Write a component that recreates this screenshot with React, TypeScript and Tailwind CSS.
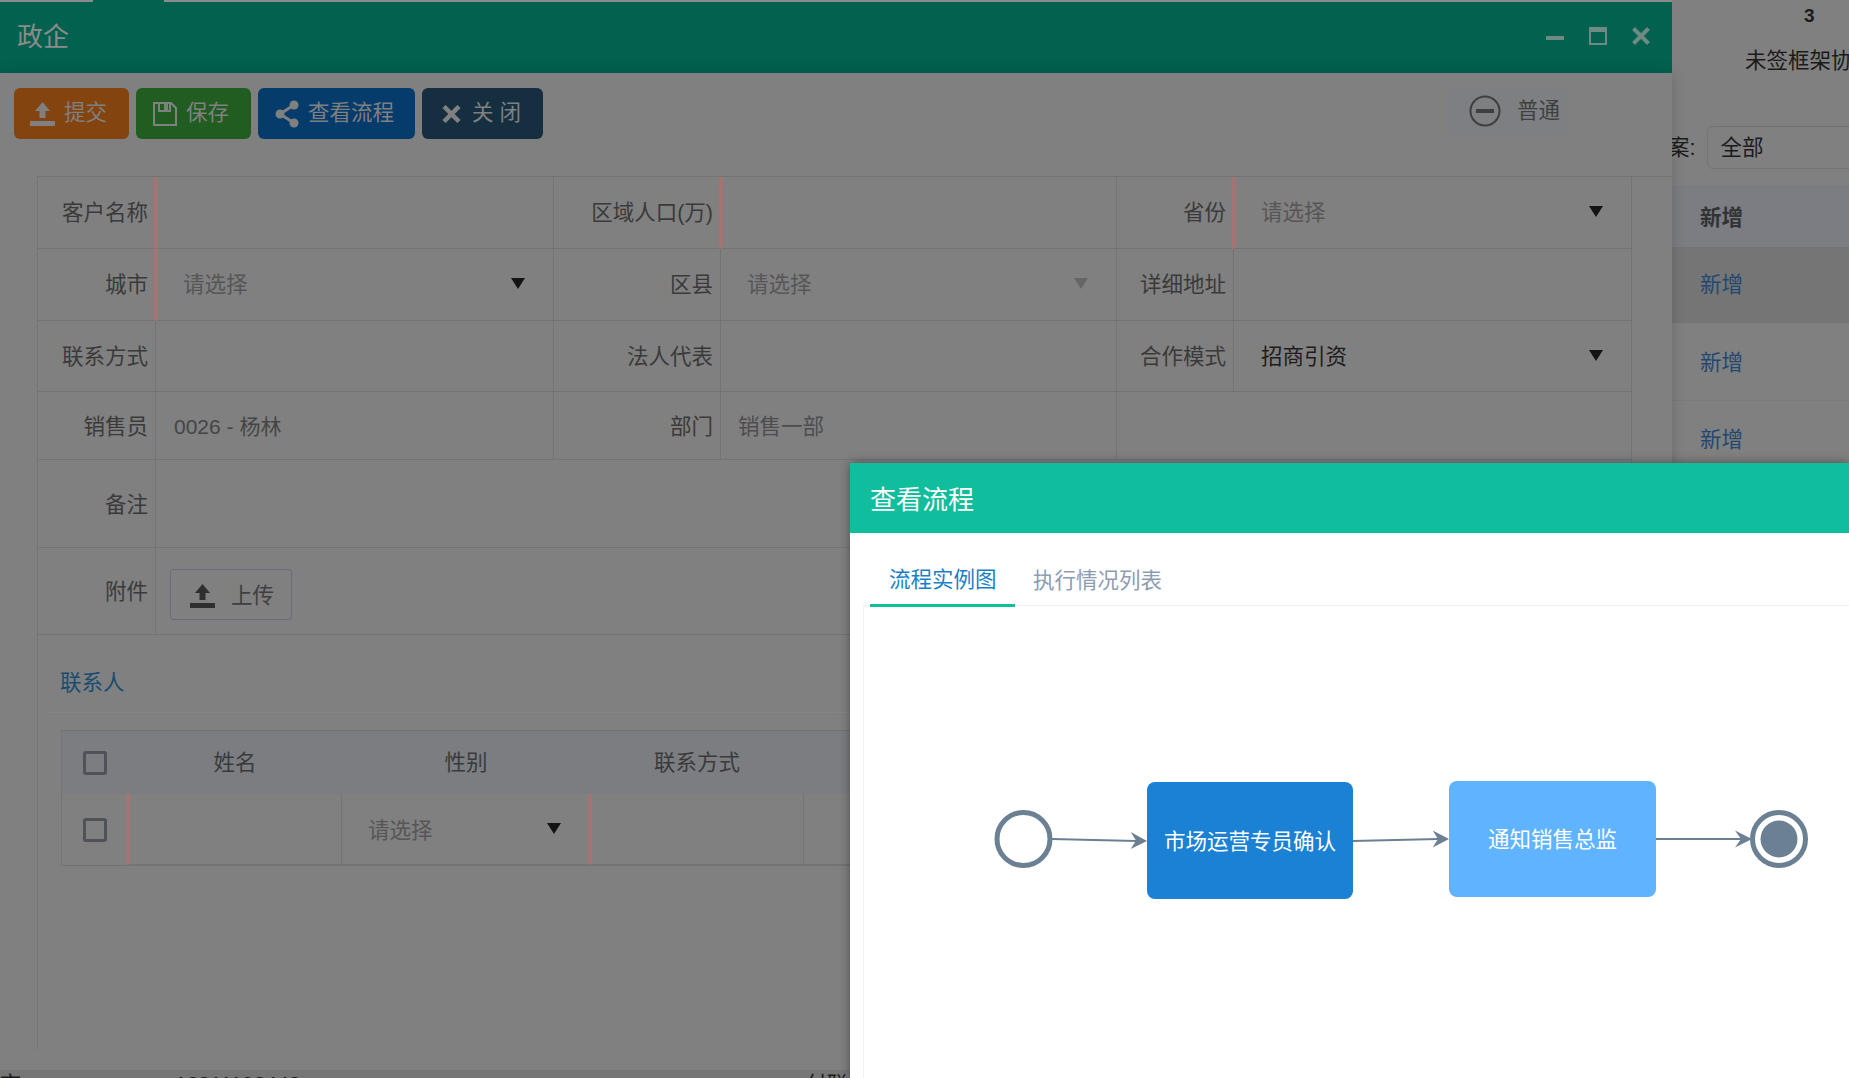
import type { ReactNode } from "react";

const UploadIcon = ({ className }: { className: string }) => (
  <svg viewBox="0 0 25 24" className={className} fill="currentColor">
    <path d="M0 19h25v5H0z" />
    <path d="M12.5 0 20 9h-4.5v7h-6V9H5z" />
  </svg>
);

const Caret = ({ muted }: { muted?: boolean }) => (
  <svg viewBox="0 0 14 11" className={`w-[14px] h-[11px] -mt-[2px] ${muted ? "text-[#666666]" : "text-[#141414]"}`} fill="currentColor">
    <path d="M0 0h14L7 11z" />
  </svg>
);

const Label = ({ children, className = "pt-[2px]" }: { children: ReactNode; className?: string }) => (
  <div className={`flex items-center justify-end pr-[7px] border-r border-b border-[#727374] text-[#3a3a3a] ${className}`}>
    {children}
  </div>
);

const Input = ({ required, children, className = "" }: { required?: boolean; children?: ReactNode; className?: string }) => (
  <div
    className={`flex items-center border-r border-b border-[#727374] ${
      required ? "border-l-4 border-l-[#a47474] -ml-[2px]" : ""
    } ${className}`}
  >
    {children}
  </div>
);

const Select = ({ required, muted }: { required?: boolean; muted?: boolean }) => (
  <Input required={required} className={`justify-between pr-[28px] ${required ? "pl-[25px]" : "pl-[26px]"}`}>
    <span className="pt-[2px] text-[#565656]">请选择</span>
    <Caret muted={muted} />
  </Input>
);

const ToolButton = ({ color, className, icon, children }: { color: string; className: string; icon: ReactNode; children: ReactNode }) => (
  <button className={`h-[51px] flex items-center rounded-[6px] text-[#808080] ${color} ${className}`}>
    {icon}
    <span>{children}</span>
  </button>
);

const Checkbox = () => <div className="w-6 h-6 border-[3px] border-[#50525a] rounded-[3px]" />;

const FlowDiagram = () => {
  const stroke = "#6b8093";
  return (
    <div className="relative flex-1">
      <svg className="absolute inset-0 w-full h-full" fill="none">
        <circle cx="159.5" cy="233" r="26.5" stroke={stroke} strokeWidth="5" />
        <path d="M188 233 272 235" stroke={stroke} strokeWidth="2" />
        <path d="M283 235 266.7 226l5.3 8.5-5.3 8.5z" fill={stroke} />
        <path d="M489 235 574 233" stroke={stroke} strokeWidth="2" />
        <path d="M585 233 568.7 224.5l5.3 8.5-5.3 8.5z" fill={stroke} />
        <path d="M792 233H877" stroke={stroke} strokeWidth="2" />
        <path d="M888 233 871 224.5l6 8.5-6 8.5z" fill={stroke} />
        <circle cx="915" cy="233" r="26.5" stroke={stroke} strokeWidth="5" />
        <circle cx="915" cy="233" r="18.5" fill={stroke} />
      </svg>
      <div className="absolute left-[283px] top-[176px] w-[206px] h-[117px] pt-[3px] flex items-center justify-center rounded-[8px] bg-[#1b81d5] text-white">
        市场运营专员确认
      </div>
      <div className="absolute left-[585px] top-[175px] w-[207px] h-[116px] pt-[3px] flex items-center justify-center rounded-[8px] bg-[#5fb3ff] text-white">
        通知销售总监
      </div>
    </div>
  );
};

const App = () => {
  return (
    <div className="relative flex w-[1849px] h-[1078px] overflow-hidden bg-[#808080] text-[21.5px] [font-family:'Liberation_Sans','Noto_Sans_CJK_SC',sans-serif]">
      {/* main window */}
      <div className="relative z-10 w-[1672px] shrink-0 flex flex-col">
        <div className="flex h-[2px] bg-[#8c8c8c]">
          <div className="w-[93px]" />
          <div className="w-[71px] bg-[#03614f]" />
        </div>
        <div className="h-[71px] flex items-center justify-between bg-[#03614f] pl-[17px] pr-[22px]">
          <span className="text-[26px] text-[#8c8c8c]">政企</span>
          <div className="flex items-center -mt-[3px] text-[#6f8a82]">
            <div className="w-[18px] h-[4px] mt-1 bg-current" />
            <div className="w-[18px] h-[18px] ml-[25px] border-2 border-t-[5px] border-current" />
            <svg viewBox="0 0 18 18" className="w-[18px] h-[18px] ml-[25px]" stroke="currentColor" strokeWidth="4">
              <path d="M1.5 1.5 16.5 16.5M16.5 1.5 1.5 16.5" />
            </svg>
          </div>
        </div>

        <div className="h-[997px] flex flex-col bg-[#808080] shadow-[0_0_12px_rgba(0,0,0,0.18)]">
          {/* toolbar */}
          <div className="flex justify-between h-[51px] mt-[15px] pl-[14px] pr-[106px]">
            <div className="flex gap-[7px]">
              <ToolButton
                color="bg-[#83440f]"
                className="w-[115px] pl-4 gap-[9px]"
                icon={<UploadIcon className="w-[25px] h-6" />}
              >
                提交
              </ToolButton>
              <ToolButton
                color="bg-[#215c20]"
                className="w-[115px] pl-[17px] gap-[9px]"
                icon={
                  <svg viewBox="0 0 24 24" className="w-6 h-6" fill="none" stroke="currentColor" strokeWidth="2">
                    <path d="M1 1h17l5 5v17H1z" />
                    <path d="M6 1v8h11V1" />
                    <path d="M11 2h4v6h-4z" fill="currentColor" stroke="none" />
                  </svg>
                }
              >
                保存
              </ToolButton>
              <ToolButton
                color="bg-[#053c6b]"
                className="w-[157px] pl-4 gap-2"
                icon={
                  <svg viewBox="0 0 26 30" className="w-[26px] h-[30px]" fill="currentColor" stroke="currentColor" strokeWidth="3">
                    <path d="M20 6 6 15l14 9" fill="none" />
                    <circle cx="6" cy="15" r="4.5" stroke="none" />
                    <circle cx="20" cy="6" r="4.5" stroke="none" />
                    <circle cx="20" cy="24" r="4.5" stroke="none" />
                  </svg>
                }
              >
                查看流程
              </ToolButton>
              <ToolButton
                color="bg-[#162f40]"
                className="w-[121px] pl-5 gap-[11px]"
                icon={
                  <svg viewBox="0 0 19 18" className="w-[19px] h-[18px]" stroke="currentColor" strokeWidth="4.5">
                    <path d="M2 1.5 17 16.5M17 1.5 2 16.5" />
                  </svg>
                }
              >
                关 闭
              </ToolButton>
            </div>
            <div className="w-[120px] h-12 flex items-center pl-[23px] gap-4 bg-[#7d7f83] text-[#3f3f3f]">
              <svg viewBox="0 0 32 32" className="w-8 h-8 shrink-0 -mt-[2px]" fill="none" stroke="currentColor">
                <circle cx="16" cy="16" r="14.5" strokeWidth="2" />
                <path d="M7 16h18" strokeWidth="4" />
              </svg>
              <span className="-mt-[2px]">普通</span>
            </div>
          </div>

          {/* form */}
          <div className="flex-1 ml-[37px] mt-[37px] mb-5 border-l border-[#747576]">
            <div className="grid grid-cols-[118px_398px_167px_396px_117px_398px] grid-rows-[72px_72px_71px_68px_88px_87px] border-t border-[#727374]">
              <Label>客户名称</Label>
              <Input required />
              <Label>区域人口(万)</Label>
              <Input required />
              <Label>省份</Label>
              <Select required />

              <Label>城市</Label>
              <Select required />
              <Label>区县</Label>
              <Select muted />
              <Label>详细地址</Label>
              <Input />

              <Label>联系方式</Label>
              <Input />
              <Label>法人代表</Label>
              <Input />
              <Label>合作模式</Label>
              <Input className="justify-between pl-[27px] pr-[28px]">
                <span className="pt-[2px] text-[#1d1d1d]">招商引资</span>
                <Caret />
              </Input>

              <Label className="pt-1">销售员</Label>
              <Input className="pl-[18px] pt-[2px] text-[21px] text-[#454545]">0026 - 杨林</Input>
              <Label className="pt-1">部门</Label>
              <Input className="pl-[17px] pt-1 text-[#4d4d4d]">销售一部</Input>
              <Input className="col-span-2" />

              <Label className="pt-1">备注</Label>
              <Input className="col-span-5" />

              <Label>附件</Label>
              <Input className="col-span-5 pl-[14px] pt-[7px]">
                <button className="w-[122px] h-[51px] flex items-center pl-[19px] gap-[16px] rounded-[3px] border border-[#696d7a] text-[#3f3f3f]">
                  <UploadIcon className="w-[25px] h-6 mt-[2px] text-[#2f2f2f]" />
                  <span className="pt-[3px]">上传</span>
                </button>
              </Input>
            </div>

            <div className="h-[78px] ml-[7px] pl-[15px] pt-5 flex items-center border-b border-[#858585] text-[#184c70]">
              联系人
            </div>

            {/* contacts table */}
            <div className="ml-[23px] mt-[17px] w-[1500px] border-l border-[#747576]">
              <div className="grid grid-cols-[66px_214px_248px_214px_1fr] h-16 items-center text-center bg-[#7b7d81] border-t border-[#727374] text-[#3a3a3a]">
                <div className="pl-[21px]">
                  <Checkbox />
                </div>
                <span className="pt-[2px]">姓名</span>
                <span className="pt-[2px]">性别</span>
                <span className="pt-[2px]">联系方式</span>
                <span />
              </div>
              <div className="grid grid-cols-[66px_214px_248px_214px_1fr] h-[72px] border-b border-[#727374]">
                <div className="flex items-center pl-[21px]">
                  <Checkbox />
                </div>
                <Input required />
                <Input className="justify-between pl-[26px] pr-[28px]">
                  <span className="pt-[4px] text-[#565656]">请选择</span>
                  <Caret />
                </Input>
                <Input required />
                <Input />
              </div>
            </div>
          </div>
        </div>

        {/* page behind the window */}
        <div className="h-2 overflow-hidden bg-[#767676] text-[#1a1a1a] whitespace-nowrap">
          <div className="flex pt-[3px] text-[21px] leading-none">
            <span className="w-[175px]">市</span>
            <span className="w-[631px]">13811192448</span>
            <span>付联</span>
          </div>
        </div>
      </div>

      {/* page behind, right of the window */}
      <div className="flex-1 min-w-0 overflow-hidden whitespace-nowrap text-[#1b1b1b]">
        <div className="h-[30px] pl-[132px] pt-[2px] flex items-center font-bold text-[19px]">3</div>
        <div className="h-[30px] mt-[15px] pl-[73px] pt-[2px] flex items-center">未签框架协议</div>
        <div className="h-[43px] mt-[51px] flex items-center">
          <span className="-ml-1 pt-[2px]">案:</span>
          <div className="w-[300px] h-[43px] ml-3 shrink-0 flex items-center pl-3 pt-[2px] rounded-[6px] border border-[#737373]">全部</div>
        </div>
        <div className="mt-4 h-[62px] flex items-center pl-7 pt-1 bg-[#7b7d82] font-bold text-[#333333]">新增</div>
        <div className="h-[76px] flex items-center pl-7 bg-[#757575] text-[#234870]">新增</div>
        <div className="h-[78px] flex items-center pl-7 pt-1 border-b border-[#7a7a7a] text-[#234870]">新增</div>
        <div className="h-[77px] flex items-center pl-7 pt-[2px] text-[#234870]">新增</div>
      </div>

      {/* flow dialog */}
      <div className="absolute z-20 left-[850px] top-[463px] right-0 bottom-0 flex flex-col bg-white shadow-[0_0_10px_rgba(0,0,0,0.4)]">
        <div className="h-[70px] shrink-0 flex items-center pl-5 pt-1 bg-[#10bd9d] text-[26px] text-white">查看流程</div>
        <div className="flex-1 flex flex-col ml-[13px]">
          <div className="h-[73px] shrink-0 flex items-end border-b border-[#eff2f5]">
            <div className="-mb-[2px] h-[55px] ml-[7px] pl-[19px] w-[145px] pt-[5px] border-b-[3px] border-[#10bd9d] text-[#1a7fc8] flex items-center">
              流程实例图
            </div>
            <div className="-mb-px h-[55px] pl-[18px] pt-[5px] flex items-center text-[#8c9cb3]">执行情况列表</div>
          </div>
          <div className="flex-1 flex border-l border-[#eff2f5]">
            <FlowDiagram />
          </div>
        </div>
      </div>
    </div>
  );
};

export default App;
